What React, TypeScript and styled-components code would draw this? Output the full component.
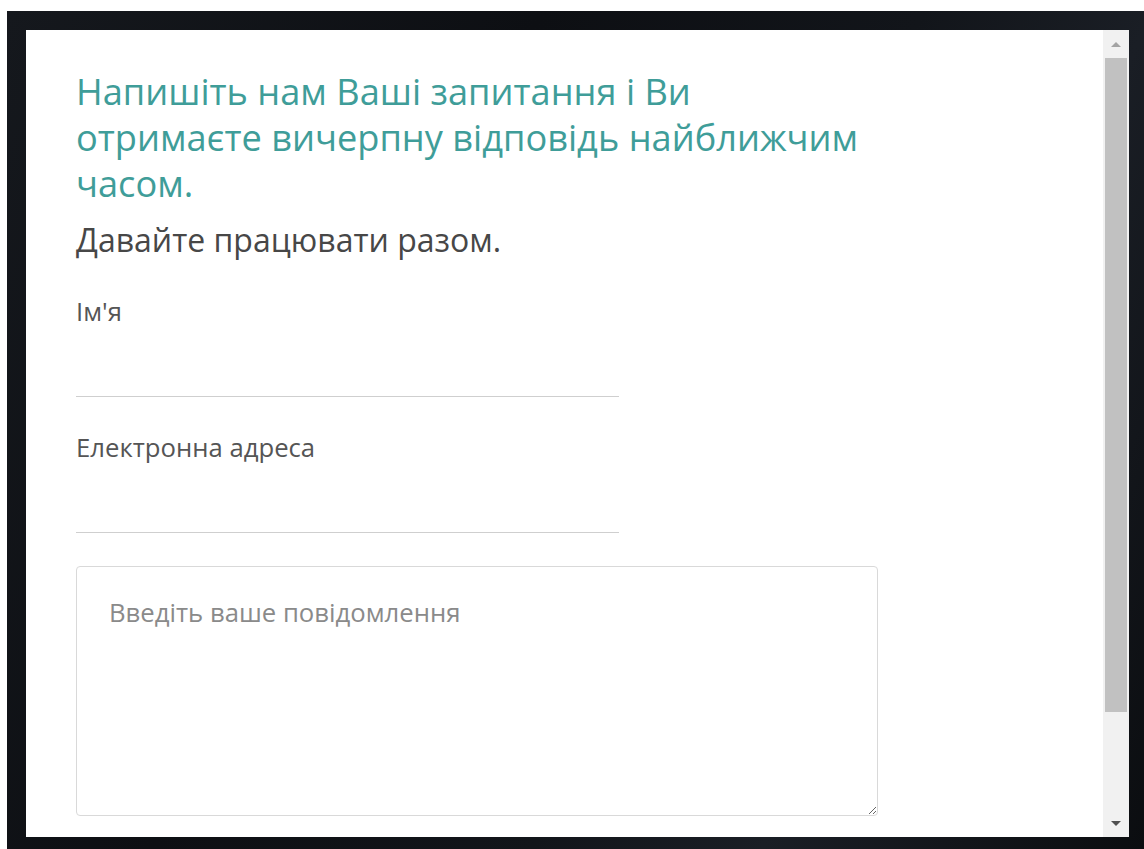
import { createGlobalStyle, styled } from 'styled-components'

const GlobalStyle = createGlobalStyle`
  html, body {
    margin: 0;
    padding: 0;
    background: #fff;
  }
  body {
    font-family: "Open Sans", "Noto Sans", sans-serif;
  }
  * {
    box-sizing: border-box;
  }
`

type Field = {
  id: string
  label: string
  type: string
}

const fields: Field[] = [
  { id: 'name', label: 'Ім\'я', type: 'text' },
  { id: 'email', label: 'Електронна адреса', type: 'email' },
]

export default function App() {
  return <>
    <GlobalStyle />
    <Backdrop>
      <Modal>
        <Content>
          <Title>Напишіть нам Ваші запитання і Ви отримаєте вичерпну відповідь найближчим часом.</Title>
          <Subtitle>Давайте працювати разом.</Subtitle>
          <form>
            {fields.map(field => (
              <FieldGroup key={field.id}>
                <Label htmlFor={field.id}>{field.label}</Label>
                <LineInput id={field.id} type={field.type} />
              </FieldGroup>
            ))}
            <Message placeholder="Введіть ваше повідомлення" />
          </form>
        </Content>
        <Scrollbar>
          <Arrow $dir="up" />
          <Track>
            <Thumb />
          </Track>
          <Arrow $dir="down" />
        </Scrollbar>
      </Modal>
    </Backdrop>
  </>
}

const Backdrop = styled.div`
  margin: 11px 0 0 7px;
  height: 838px;
  padding: 19px 15px 12px 19px;
  background: linear-gradient(115deg, #15181d 0%, #0d0f13 35%, #12151a 60%, #1a1e25 75%, #0b0d10 100%);
`
const Modal = styled.div`
  height: 100%;
  display: flex;
  background: #fff;
  overflow: hidden;
`
const Content = styled.div`
  flex: 1;
  padding: 38px 0 0 50px;
  overflow: hidden;
`
const Title = styled.h2`
  width: 802px;
  margin: 0;
  font-size: 36.2px;
  line-height: 46px;
  font-weight: 400;
  color: #3f9d99;
`
const Subtitle = styled.p`
  margin: 15px 0 37px;
  font-size: 32px;
  line-height: 38px;
  color: #474747;
`
const FieldGroup = styled.div`
  display: flex;
  flex-direction: column;
  width: 543px;
  margin-bottom: 35px;

  &:last-of-type {
    margin-bottom: 33px;
  }
`
const Label = styled.label`
  font-size: 25.7px;
  line-height: 32px;
  color: #555;
`
const LineInput = styled.input`
  height: 69px;
  border: 0;
  border-bottom: 1px solid #cfcfcf;
  outline: none;
  background: transparent;
  font: inherit;
  font-size: 25px;
`
const Message = styled.textarea`
  display: block;
  width: 802px;
  height: 250px;
  padding: 30px 32px;
  border: 1px solid #d9d9d9;
  border-radius: 4px;
  outline: none;
  font-family: "Open Sans", "Noto Sans", sans-serif;
  font-size: 25.7px;
  line-height: 32px;
  color: #444;

  &::placeholder {
    color: #8a8a8a;
  }
`
const Scrollbar = styled.div`
  width: 26px;
  display: flex;
  flex-direction: column;
  background: #f1f1f1;
`
const Arrow = styled.div<{ $dir: 'up' | 'down' }>`
  height: 26px;
  display: flex;
  align-items: center;
  justify-content: center;

  &::before {
    content: '';
    border-left: 5px solid transparent;
    border-right: 5px solid transparent;
    ${p => p.$dir === 'up'
      ? 'border-bottom: 5px solid #a3a3a3; margin-top: 2px;'
      : 'border-top: 5px solid #505050; margin-bottom: 2px;'}
  }
`
const Track = styled.div`
  flex: 1;
  padding: 2px 2px 0;
`
const Thumb = styled.div`
  height: 654px;
  background: #c1c1c1;
`
